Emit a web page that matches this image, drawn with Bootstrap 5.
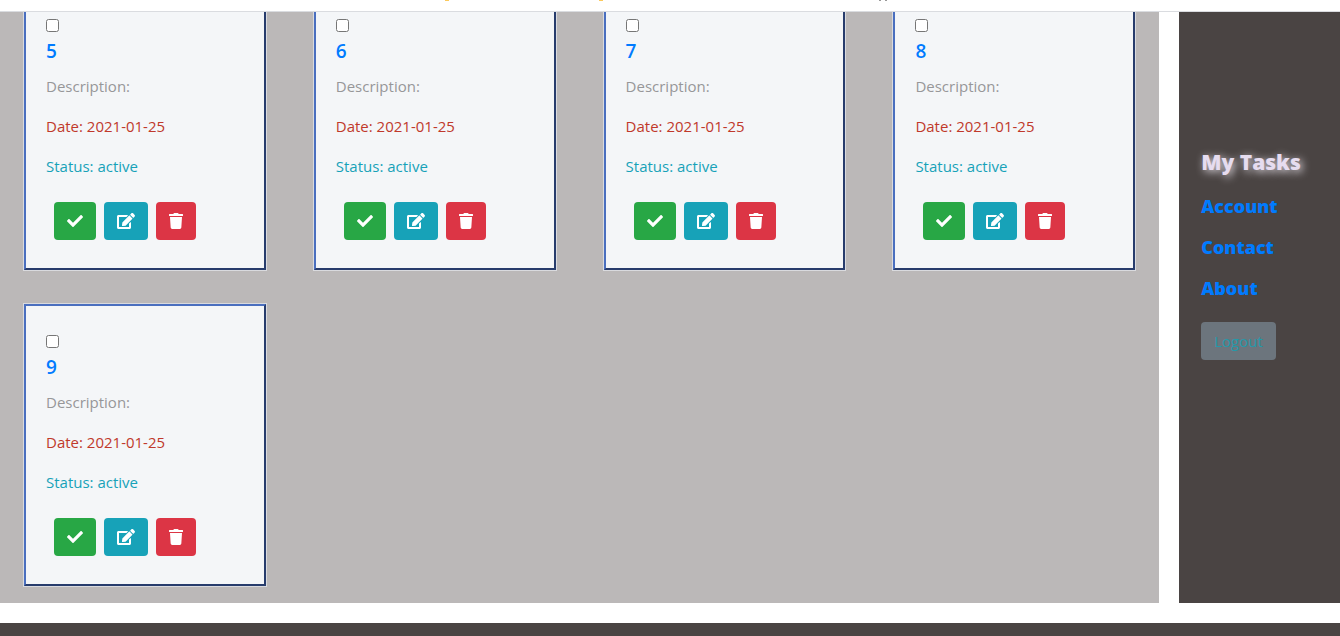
<!DOCTYPE html>
<html lang="en">
<head>
<meta charset="utf-8">
<meta name="viewport" content="width=device-width, initial-scale=1">
<title>My Tasks</title>
<link href="https://cdn.jsdelivr.net/npm/bootstrap@5.3.0/dist/css/bootstrap.min.css" rel="stylesheet">
<style>
  body { font-family: "Open Sans", "Noto Sans", sans-serif; font-size: 15px; line-height: 24px; background: #fff; }
  a { color: #007bff; text-decoration: none; }
  .top-strip { height: 12px; border-bottom: 1px solid #dadce0; }
  .page-body { gap: 20px; margin-bottom: 20px; }
  .board { background: #bbb8b8; padding-bottom: 16px; }
  .task-grid { --bs-gutter-x: 46px; row-gap: 32px; margin: -25px 0 0; }
  .task-card { border: 1px solid #d9dade; border-radius: 0; background: #f4f6f8; }
  .task-inner { border: 2px solid; border-color: #4a6fbf #273c6c #273c6c #4a6fbf; padding: 29px 20px 28px; }
  .task-check { width: 13px; height: 13px; margin: 0; }
  .task-title { font-size: 19px; line-height: 24px; font-weight: 600; margin: 7px 0 11px; }
  .desc { color: #979799; }
  .date { color: #c0392b; }
  .status { color: #17a2b8; }
  .task-inner p { margin-bottom: 16px; }
  .task-actions { padding: 8px 8px 0; }
  .act { height: 38px; padding: 0 13px; border: 0; border-radius: 4px; color: #fff; display: flex; align-items: center; }
  .act svg { height: 16px; display: block; fill: #fff; }
  .act-done { background: #28a745; }
  .act-edit { background: #17a2b8; }
  .act-del { background: #dc3545; }
  .side { flex: 0 0 12%; background: #4a4443; padding: 134px 0 0 22px; }
  .side-title { font-size: 21px; line-height: 32px; font-weight: 800; color: #e6dcef; text-shadow: 2px 2px 8px #e9e4ec; margin: 0 0 16px; }
  .side-nav { gap: 17px; font-size: 18px; font-weight: 800; margin-bottom: 22px; }
  .logout { height: 38px; padding: 0 13px; border: 0; border-radius: 4px; background: #6c757d; color: #2599a9; }
  .bottom-bar { background: #4a4443; min-height: 13px; }
</style>
</head>
<body class="min-vh-100 d-flex flex-column overflow-hidden">
<header class="top-strip flex-shrink-0">
  <svg class="d-block w-100" height="2" aria-hidden="true"><path fill="#fbc95c" d="M445 0h4v1h-4zM599 0h4v1h-4z"/><path fill="#999" d="M879 0h2v1h-2zM885 0h2v1h-2z"/></svg>
</header>
<div class="page-body d-flex">
  <main class="board flex-grow-1 overflow-hidden">
    <div class="row row-cols-4 task-grid" id="tasks"></div>
  </main>
  <aside class="side">
    <h1 class="side-title text-nowrap">My Tasks</h1>
    <nav class="side-nav d-flex flex-column align-items-start">
      <a href="#account">Account</a>
      <a href="#contact">Contact</a>
      <a href="#about">About</a>
    </nav>
    <button type="button" class="logout">Logout</button>
  </aside>
</div>
<footer class="bottom-bar flex-grow-1"></footer>
<script>
  document.getElementById('tasks').innerHTML = [5, 6, 7, 8, 9].map(n => `
    <div class="col">
      <article class="card task-card"><div class="task-inner">
        <input class="task-check d-block" type="checkbox" id="task${n}" aria-label="Task ${n}">
        <h5 class="task-title"><a href="#task${n}">${n}</a></h5>
        <p class="desc">Description:</p>
        <p class="date">Date: 2021-01-25</p>
        <p class="status">Status: active</p>
        <div class="task-actions d-flex gap-2">
          <button type="button" class="act act-done" aria-label="Complete"><svg width="16" viewBox="0 0 512 512"><path d="M173.898 439.404l-166.4-166.4c-9.997-9.997-9.997-26.206 0-36.204l36.203-36.204c9.997-9.998 26.207-9.998 36.204 0L192 312.69 432.095 72.596c9.997-9.997 26.207-9.997 36.204 0l36.203 36.204c9.997 9.997 9.997 26.206 0 36.204l-294.4 294.401c-9.998 9.997-26.207 9.997-36.204-.001z"/></svg></button>
          <button type="button" class="act act-edit" aria-label="Edit"><svg width="18" viewBox="0 0 576 512"><path d="M402.6 83.2l90.2 90.2c3.8 3.8 3.8 10 0 13.8L274.4 405.6l-92.8 10.3c-12.4 1.4-22.9-9.1-21.5-21.5l10.3-92.8L388.8 83.2c3.8-3.8 10-3.8 13.8 0zm162-22.9l-48.8-48.8c-15.2-15.2-39.9-15.2-55.2 0l-35.4 35.4c-3.8 3.8-3.8 10 0 13.8l90.2 90.2c3.8 3.8 10 3.8 13.8 0l35.4-35.4c15.2-15.3 15.2-40 0-55.2zM384 346.2V448H64V128h229.8c3.2 0 6.2-1.3 8.5-3.5l40-40c7.6-7.6 2.2-20.5-8.5-20.5H48C21.5 64 0 85.5 0 112v352c0 26.500 21.500 48 48 48h352c26.500 0 48-21.500 48-48V306.200c0-10.700-12.900-16-20.500-8.500l-40 40c-2.200 2.300-3.500 5.300-3.500 8.500z"/></svg></button>
          <button type="button" class="act act-del" aria-label="Delete"><svg width="14" viewBox="0 0 448 512"><path d="M432 32H312l-9.400-18.700A24 24 0 0 0 281.100 0H166.800a23.720 23.720 0 0 0-21.400 13.300L136 32H16A16 16 0 0 0 0 48v32a16 16 0 0 0 16 16h416a16 16 0 0 0 16-16V48a16 16 0 0 0-16-16zM53.200 467a48 48 0 0 0 47.900 45h245.800a48 48 0 0 0 47.900-45L416 128H32z"/></svg></button>
        </div>
      </div></article>
    </div>`).join('');
</script>
<script src="https://cdn.jsdelivr.net/npm/bootstrap@5.3.0/dist/js/bootstrap.bundle.min.js"></script>
</body>
</html>
